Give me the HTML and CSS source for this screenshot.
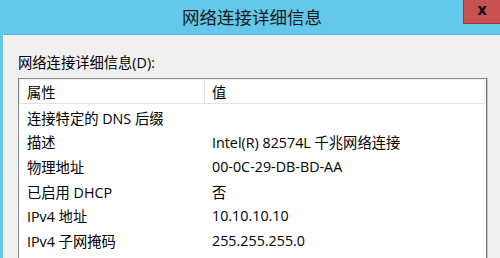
FILE: index.html
```html
<!DOCTYPE html>
<html lang="zh-CN">
<head>
<meta charset="utf-8">
<title>网络连接详细信息</title>
<link rel="stylesheet" href="styles.css">
</head>
<body>
<div class="window">
  <div class="titlebar">
    <span class="title">网络连接详细信息</span>
    <span class="close">x</span>
  </div>
  <div class="frame">
    <div class="label">网络连接详细信息(D):</div>
    <div class="list">
      <div class="row head">
        <div class="c1">属性</div>
        <div class="c2">值</div>
      </div>
      <div class="row"><div class="c1">连接特定的 DNS 后缀</div><div class="c2"></div></div>
      <div class="row"><div class="c1">描述</div><div class="c2">Intel(R) 82574L 千兆网络连接</div></div>
      <div class="row"><div class="c1">物理地址</div><div class="c2">00-0C-29-DB-BD-AA</div></div>
      <div class="row"><div class="c1">已启用 DHCP</div><div class="c2">否</div></div>
      <div class="row"><div class="c1">IPv4 地址</div><div class="c2">10.10.10.10</div></div>
      <div class="row"><div class="c1">IPv4 子网掩码</div><div class="c2">255.255.255.0</div></div>
    </div>
  </div>
</div>
</body>
</html>
```
FILE: styles.css
```css
html, body {
  margin: 0;
  padding: 0;
}
body {
  width: 500px;
  height: 258px;
  overflow: hidden;
  background: #63c8e9;
  font-family: "Open Sans", "Noto Sans CJK SC", sans-serif;
  color: #000;
}
.window {
  display: flex;
  flex-direction: column;
  height: 258px;
}
.titlebar {
  position: relative;
  height: 34px;
  display: flex;
  align-items: center;
  justify-content: center;
  padding-left: 4px;
}
.title {
  font-family: "Noto Sans CJK SC", sans-serif;
  font-size: 17.5px;
  line-height: 20px;
  color: #1a1a1a;
}
.close {
  position: absolute;
  top: 0;
  right: 0;
  width: 36px;
  height: 21px;
  background: #c75050;
  border-left: 1px solid #9a3a3a;
  border-bottom: 1px solid #9a3a3a;
  display: flex;
  align-items: center;
  justify-content: center;
  font-family: "DejaVu Sans", sans-serif;
  font-weight: bold;
  font-size: 15px;
  line-height: 15px;
  color: #111;
  padding-bottom: 2px;
  box-sizing: content-box;
}
.frame {
  flex: 1;
  margin-left: 3px;
  border-top: 1px solid #56b3d4;
  border-left: 1px solid #e9f6fb;
  background: #f0f0f0;
  padding: 19px 13px 0 14px;
  overflow: hidden;
}
.label {
  font-size: 14.3px;
  line-height: 18px;
  margin-bottom: 6px;
}
.list {
  background: #fff;
  border: 1px solid #828790;
  border-right: 1px solid #6f747c;
  box-shadow: 1px 0 0 #c4c6ca;
  height: 300px;
  font-size: 14.3px;
}
.row {
  display: flex;
  height: 24.6px;
  align-items: center;
}
.row.head {
  height: 25px;
  border: 1px solid #e6e6e6;
  border-top-color: #f0f0f0;
  border-bottom: 1px solid #e3e3e3;
  margin: 0 1px 0 0;
  box-sizing: border-box;
  margin-bottom: 1px;
  background: #fff;
}
.c1 {
  width: 186px;
  padding-left: 8px;
  box-sizing: border-box;
  white-space: nowrap;
}
.head .c1 {
  width: 185px;
  padding-left: 7px;
  border-right: 1px solid #e6e6e6;
  height: 100%;
  display: flex;
  align-items: center;
}
.c2 {
  padding-left: 7px;
  white-space: nowrap;
}
```
